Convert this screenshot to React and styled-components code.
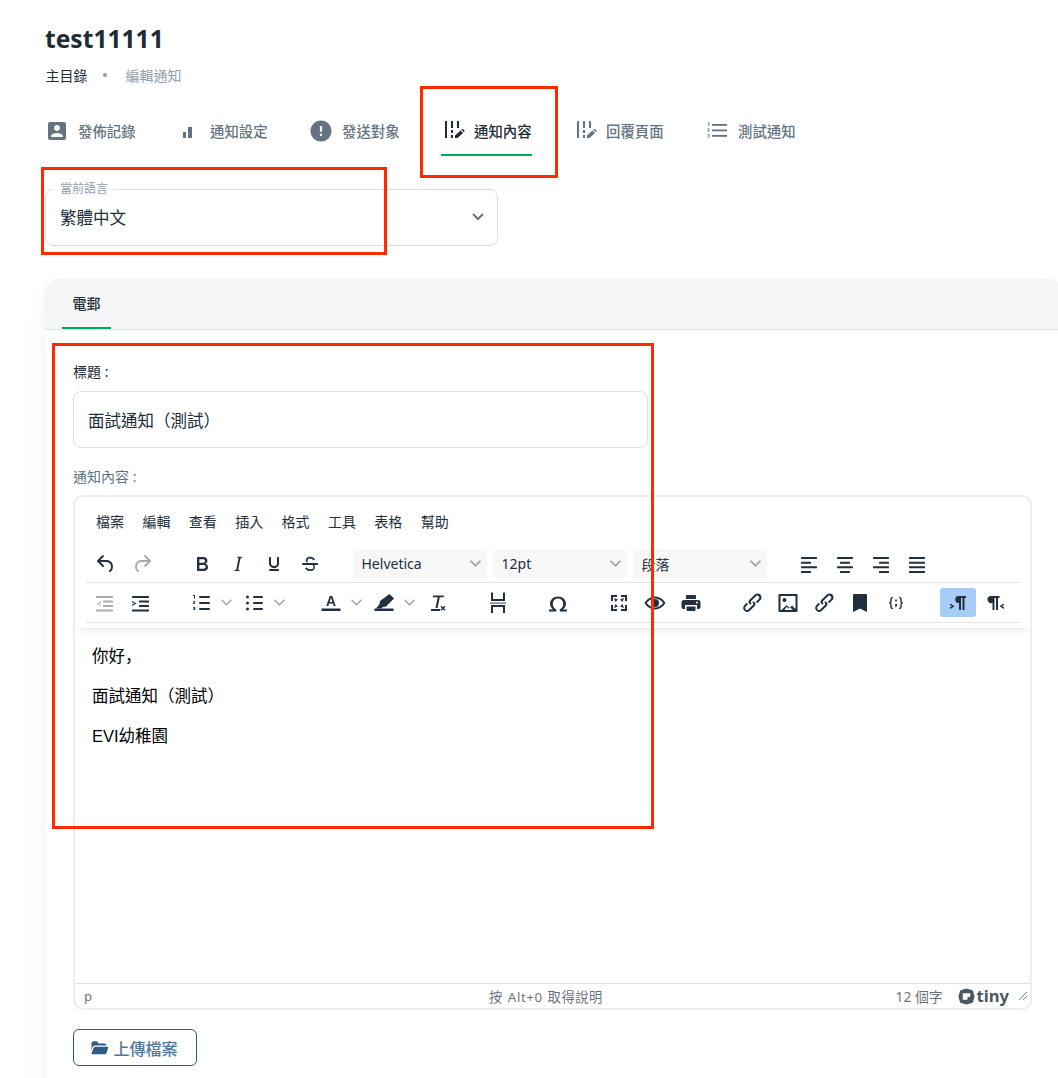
import React from 'react';
import styled, { createGlobalStyle } from 'styled-components';

const Global = createGlobalStyle`
  html, body { margin: 0; padding: 0; background: #fff; height: 1078px; overflow: hidden; }
  body { font-family: "Noto Sans", "Noto Sans CJK TC", sans-serif; color: #212B36; }
  #root { height: 1078px; overflow: hidden; position: relative; }
  * { box-sizing: border-box; }
`;

const Page = styled.div`
  width: 1078px;
  padding: 22px 0 0 45px;
`;
const Title = styled.h1`
  margin: 0;
  font: 700 24.6px/34px "Noto Sans", "Noto Sans CJK TC", sans-serif;
  color: #212B36;
`;
const Crumbs = styled.div`
  margin: 9px 0 0 .5px;
  display: flex;
  align-items: center;
  height: 20px;
  font-size: 14px;
`;
const CrumbDot = styled.span`
  width: 4px;
  height: 4px;
  margin: 0 19px 0 15px;
  border-radius: 50%;
  background: #919EAB;
`;
const CrumbMuted = styled.span`
  color: #919EAB;
`;
const Tabs = styled.div`
  margin-top: 23px;
  display: flex;
  gap: 41px;
`;
const Tab = styled.div`
  position: relative;
  width: 91px;
  height: 48px;
  padding-bottom: 1px;
  display: flex;
  align-items: center;
  gap: 9px;
  font-size: 14.4px;
  font-weight: 500;
  white-space: nowrap;
  color: ${p => (p.$active ? '#212B36' : '#637381')};
  border-bottom: 2px solid ${p => (p.$active ? '#00AB55' : 'transparent')};
  svg { flex: none; }
`;
const Field = styled.div`
  position: relative;
  width: 453px;
  height: 57px;
  margin-top: 33px;
  border: 1px solid #DCE0E4;
  border-radius: 8px;
  display: flex;
  align-items: center;
  justify-content: space-between;
  padding: 0 7px 2px 14px;
  font-size: 16.5px;
`;
const Legend = styled.span`
  position: absolute;
  top: -9px;
  left: 9px;
  padding: 0 5px;
  background: #fff;
  font-size: 12px;
  line-height: 16px;
  color: #919EAB;
`;
const Card = styled.section`
  margin-top: 33px;
  width: 1018px;
  height: 900px;
  border-radius: 16px;
  background: #fff;
  box-shadow: 0 0 2px rgba(145,158,171,.2), 0 12px 24px -4px rgba(145,158,171,.12);
  overflow: hidden;
`;
const CardHead = styled.div`
  height: 51px;
  padding-left: 17px;
  background: #F4F6F8;
  border-bottom: 1px solid #DFE3E8;
`;
const CardTab = styled.div`
  width: 49px;
  height: 50px;
  display: flex;
  align-items: center;
  justify-content: center;
  font-size: 14px;
  font-weight: 500;
  color: #212B36;
  border-bottom: 2px solid #00AB55;
`;
const CardBody = styled.div`
  padding: 32px 0 0 28px;
`;
const Label = styled.div`
  height: 20px;
  font-size: 14px;
  line-height: 20px;
  color: ${p => (p.$muted ? '#637381' : '#212B36')};
`;
const Input = styled.div`
  margin: 9px 0 19px;
  width: 575px;
  height: 57px;
  padding: 0 14px;
  display: flex;
  align-items: center;
  border: 1px solid #DCE0E4;
  border-radius: 8px;
  font-size: 16.5px;
`;
const Editor = styled.div`
  margin-top: 8px;
  position: relative;
  width: 959px;
  height: 515px;
  border: 2px solid #EEEEEE;
  border-radius: 10px;
  overflow: hidden;
  display: flex;
  flex-direction: column;
`;
const Header = styled.div`
  height: 131px;
  flex: none;
  padding: 0 11px;
  box-shadow: 0 2px 2px -2px rgba(34,47,62,.1), 0 8px 8px -4px rgba(34,47,62,.07);
  position: relative;
`;
const Menu = styled.div`
  height: 48px;
  padding-left: 10px;
  display: flex;
  align-items: center;
  gap: 18.4px;
  font-size: 14px;
  color: #222F3E;
`;
const ToolRow = styled.div`
  height: 38px;
  padding-left: 1.5px;
  display: flex;
  align-items: center;
  gap: 24.5px;
  border-bottom: 1px solid #E3E3E3;
`;
const ToolRow2 = styled(ToolRow)`
  height: 40px;
  padding-left: 0;
  gap: 24.6px;
`;
const Group = styled.div`
  display: flex;
  align-items: center;
  margin-left: ${p => p.$shift || 0}px;
  gap: ${p => p.$gap || 0}px;
`;
const Btn = styled.span`
  width: 36px;
  height: 29px;
  flex: none;
  display: flex;
  align-items: center;
  justify-content: center;
  border-radius: 3px;
  background: ${p => (p.$on ? '#A6CCF7' : 'transparent')};
  color: ${p => (p.$off ? 'rgba(34,47,62,.4)' : '#222F3E')};
  svg { display: block; fill: currentColor; }
`;
const Split = styled.span`
  width: 53px;
  display: flex;
  align-items: center;
`;
const Chevron = styled.span`
  display: flex;
  width: 17px;
  padding-left: 2px;
  color: rgba(34,47,62,.45);
  svg { display: block; flex: none; }
`;
const SelectBox = styled.div`
  width: ${p => p.$w}px;
  height: 29px;
  padding: 0 6px 0 9px;
  display: flex;
  align-items: center;
  justify-content: space-between;
  background: #F7F7F7;
  border-radius: 3px;
  font-size: 14px;
  color: #222F3E;
  svg { color: rgba(34,47,62,.5); }
`;
const Content = styled.div`
  flex: 1;
  padding: 15px 17px;
  font: 16.5px/24px "Liberation Sans", "Noto Sans CJK TC", sans-serif;
  color: #000;
  p { margin: 0 0 16px; }
`;
const Comma = styled.span`
  font-family: "Noto Sans CJK SC", sans-serif;
`;
const Status = styled.div`
  height: 25px;
  flex: none;
  position: relative;
  border-top: 1px solid #E3E3E3;
  padding: 0 2px 0 9px;
  display: flex;
  align-items: center;
  justify-content: space-between;
  font-size: 13.3px;
  color: rgba(34,47,62,.7);
`;
const Help = styled.span`
  position: absolute;
  left: 414px;
  word-spacing: 1px;
  letter-spacing: .55px;
`;
const StatusRight = styled.div`
  display: flex;
  align-items: center;
  font-size: 13.8px;
`;
const Tiny = styled.span`
  margin-left: 15px;
  display: flex;
  align-items: center;
  gap: 2px;
  font: 700 16.6px/16px "Noto Sans", sans-serif;
  color: #4B5864;
`;
const Grip = styled.svg`
  margin-left: 9px;
`;
const Upload = styled.button`
  margin-top: 19px;
  width: 124px;
  height: 37px;
  padding: 0 3px 0 0;
  display: flex;
  align-items: center;
  justify-content: center;
  gap: 4px;
  background: #fff;
  border: 1px solid #2F5C85;
  border-radius: 6px;
  font: 500 16px "Noto Sans", "Noto Sans CJK TC", sans-serif;
  color: #54789A;
  svg { color: #2F5C85; }
`;
const Mark = styled.div`
  position: absolute;
  left: ${p => p.$x}px;
  top: ${p => p.$y}px;
  width: ${p => p.$w}px;
  height: ${p => p.$h}px;
  border: 3px solid #FF2B00;
  pointer-events: none;
`;

const I = ({ d, children, size = 24, vb = 24 }) => (
  <svg width={size} height={size} viewBox={`0 0 ${vb} ${vb}`} fill="currentColor">{d ? <path d={d} /> : children}</svg>
);
const Chev = ({ w = 11, h = 7 }) => (
  <svg width={w} height={h} viewBox="0 0 10 6" fill="none" stroke="currentColor" strokeWidth="1.2"><path d="M.5.5 5 5 9.500.5" /></svg>
);

const Tune = ({ fill }) => (
  <svg width="24" height="24" viewBox="0 -1 24 24" fill={fill}>
    <rect x="4" y="1" width="2" height="17" />
    <rect x="10" y="1" width="2" height="7" /><rect x="10" y="10" width="2" height="3" /><rect x="10" y="15" width="2" height="3" />
    <rect x="16" y="1" width="2" height="7" />
    <path d="M14 15.500v2.500h2.500l5.500-5-2.500-2.500zM20.300 9.700l2.500 2.500 1-1.200-2.300-2.300z" />
  </svg>
);
const TabList = () => (
  <svg width="24" height="24" viewBox="0 0 24 24" fill="#637381">
    <rect x="7" y="5" width="15" height="1.800" /><rect x="7" y="10.500" width="15" height="1.800" /><rect x="7" y="16" width="15" height="1.800" />
    <path d="M3 3.500h1.300V7H3.400V4.500H3zM2.500 9.500h2v.8L3.500 11.700h1v.7h-2v-.7l1-1.400h-1zM2.500 15h2v3.500h-2v-.6h1.200v-.6H3v-.6h.7v-1h-1.200z" />
  </svg>
);
const NumList = () => (
  <svg width="24" height="24" viewBox="0 0 24 24" fill="currentColor">
    <rect x="10" y="17" width="11" height="2" rx="1" /><rect x="10" y="11" width="11" height="2" rx="1" /><rect x="10" y="5" width="11" height="2" rx="1" />
    <path d="M6 4v3.500H5V5H4V4zM4 10h2.200v.8L5 12.200h1.200V13H4v-.8l1.200-1.400H4zM4 16h2.200v3H4v-.7h1.300v-.4H4.500v-.7h.8v-.5H4z" />
  </svg>
);
const BulList = () => (
  <I><rect x="11" y="5" width="10" height="2" rx="1" /><rect x="11" y="11" width="10" height="2" rx="1" /><rect x="11" y="17" width="10" height="2" rx="1" /><circle cx="5.500" cy="6" r="1.500" /><circle cx="5.500" cy="12" r="1.500" /><circle cx="5.500" cy="18" r="1.500" /></I>
);
const Align = ({ rows }) => (
  <I>{rows.map(([x, w], i) => <rect key={i} x={x} y={5 + i * 4.67} width={w} height="2" rx=".5" />)}</I>
);
const LinkIco = () => (
  <I d="M6.200 12.300a1 1 0 0 1 1.400 1.400l-2.100 2.100a2 2 0 0 0 2.800 2.800l4.800-4.800a1 1 0 0 0 0-1.400 1 1 0 1 1 1.400-1.300 2.900 2.900 0 0 1 0 4.100l-4.800 4.800a4 4 0 0 1-5.600-5.600l2.100-2.100zm11.600-.6a1 1 0 0 1-1.400-1.400l2.100-2.100a2 2 0 1 0-2.800-2.800L10.900 10.200a1 1 0 0 0 0 1.400 1 1 0 1 1-1.400 1.300 2.900 2.900 0 0 1 0-4.100l4.800-4.800a4 4 0 1 1 5.600 5.600l-2.100 2.100z" />
);

const tabs = [
  ['發佈記錄', <I key="a" d="M3 5v14c0 1.100.89 2 2 2h14c1.100 0 2-.9 2-2V5c0-1.100-.9-2-2-2H5c-1.110 0-2 .9-2 2zm12 4c0 1.660-1.340 3-3 3s-3-1.340-3-3 1.340-3 3-3 3 1.340 3 3zm-9 8c0-2 4-3.100 6-3.100s6 1.100 6 3.100v1H6v-1z" />],
  ['通知設定', <I key="b"><rect x="6" y="13" width="3" height="6" /><rect x="11" y="8" width="4" height="11" /></I>],
  ['發送對象', <I key="c" d="M12 1.500C6.200 1.500 1.500 6.200 1.500 12S6.200 22.500 12 22.500 22.500 17.800 22.500 12 17.800 1.500 12 1.500zm1.100 15.500h-2.200v-2.200h2.200V17zm0-4.300h-2.200V7h2.200v5.700z" />],
  ['通知內容', <Tune key="d" fill="#212B36" />],
  ['回覆頁面', <Tune key="e" fill="#637381" />],
  ['測試通知', <TabList key="f" />],
];

export default function App() {
  return (
    <>
      <Global />
      <Page>
        <Title>test11111</Title>
        <Crumbs>主目錄<CrumbDot /><CrumbMuted>編輯通知</CrumbMuted></Crumbs>
        <Tabs>
          {tabs.map(([t, ic], i) => <Tab key={t} $active={i === 3}>{ic}{t}</Tab>)}
        </Tabs>
        <Field>
          <Legend>當前語言</Legend>
          繁體中文
          <svg width="24" height="24" viewBox="0 0 24 24" fill="#637381"><path d="M12 15.400 6.300 9.700l1.400-1.400 4.300 4.300 4.300-4.300 1.400 1.400z" /></svg>
        </Field>
        <Card>
          <CardHead><CardTab>電郵</CardTab></CardHead>
          <CardBody>
            <Label>標題 :</Label>
            <Input>面試通知（測試）</Input>
            <Label $muted>通知內容 :</Label>
            <Editor>
              <Header>
                <Menu>
                  {['檔案', '編輯', '查看', '插入', '格式', '工具', '表格', '幫助'].map(m => <span key={m}>{m}</span>)}
                </Menu>
                <ToolRow>
                  <Group>
                    <Btn><I d="M6.400 8H12c3.700 0 6.200 2 6.800 5.100.6 2.700-.4 5.600-2.300 6.800a1 1 0 0 1-1-1.800c1.100-.6 1.800-2.700 1.400-4.600-.5-2.100-2.100-3.500-4.900-3.500H6.400l3.300 3.300a1 1 0 1 1-1.400 1.400l-5-5a1 1 0 0 1 0-1.400l5-5a1 1 0 0 1 1.400 1.400L6.400 8z" /></Btn>
                    <Btn $off><I d="M17.600 10H12c-2.800 0-4.400 1.400-4.900 3.500-.4 2 .3 4 1.400 4.600a1 1 0 1 1-1 1.800c-2-1.200-2.900-4.100-2.300-6.800.6-3 3-5.100 6.800-5.100h5.600l-3.300-3.300a1 1 0 1 1 1.400-1.400l5 5a1 1 0 0 1 0 1.400l-5 5a1 1 0 0 1-1.400-1.400l3.300-3.300z" /></Btn>
                  </Group>
                  <Group>
                    <Btn><I d="M7.800 19c-.3 0-.5 0-.6-.2l-.2-.5V5.700c0-.2 0-.4.2-.5l.6-.2h5c1.500 0 2.700.3 3.500 1 .7.6 1.100 1.400 1.100 2.500a3 3 0 0 1-.6 1.900c-.4.600-1 1-1.600 1.200.4.100.9.300 1.300.6s.8.700 1 1.200c.4.400.5 1 .5 1.600 0 1.300-.4 2.300-1.300 3-.8.700-2.100 1-3.800 1H7.800zm5-8.300c.6 0 1.200-.1 1.600-.5.4-.3.6-.7.6-1.300 0-1.100-.8-1.700-2.300-1.700H9.300v3.500h3.400zm.5 6c.7 0 1.300-.1 1.700-.4.400-.4.6-.9.6-1.500s-.2-1-.7-1.400c-.4-.3-1-.4-2-.4H9.400v3.800h4z" /></Btn>
                    <Btn><I d="M16.700 4.700l-.1.900h-.3c-.6 0-1 0-1.400.3-.3.300-.4.600-.5 1.100l-2.100 9.800v.6c0 .5.4.8 1.400.8h.2l-.2.800H8l.2-.8h.2c1.100 0 1.800-.5 2-1.500l2-9.800.1-.5c0-.6-.4-.8-1.400-.8h-.3l.2-.9h5.800z" /></Btn>
                    <Btn><I d="M16 5c.6 0 1 .4 1 1v5.500a4 4 0 0 1-.4 1.800l-1 1.400a5.300 5.300 0 0 1-5.500 1 5 5 0 0 1-1.600-1c-.5-.4-.8-.9-1.100-1.400a4 4 0 0 1-.4-1.800V6c0-.6.4-1 1-1s1 .4 1 1v5.500c0 .3 0 .6.2 1l.6.7a3.300 3.300 0 0 0 2.200.8 3.400 3.400 0 0 0 2.200-.8c.3-.2.4-.5.6-.8l.2-.9V6c0-.6.4-1 1-1zM8 17h8c.6 0 1 .4 1 1s-.4 1-1 1H8a1 1 0 0 1 0-2z" /></Btn>
                    <Btn><I d="M15.600 8.500c-.5-.7-1-1.100-1.300-1.300-.6-.4-1.300-.6-2-.6-2.700 0-2.800 1.700-2.800 2.100 0 .7.300 1.200.8 1.300h-2c-.3-.4-.5-.9-.5-1.500 0-1.700 1.200-3.700 4.500-3.700 1.100 0 2.100.3 3.100 1 .6.400 1.100 1 1.600 1.700l-1.400 1zM5 11h14c.6 0 1 .4 1 1s-.4 1-1 1h-2.700c.4.600.6 1.200.6 1.900 0 1.400-.7 4.100-5 4.100A6.200 6.200 0 0 1 7 16.400l1.500-1.100c.4.600 1.600 2 3.700 2 1.600 0 2.500-.4 3-1 .5-.8.3-2-.2-2.600l-.2-.7H5a1 1 0 0 1 0-2z" /></Btn>
                  </Group>
                  <Group $gap={6}>
                    <SelectBox $w={134}>Helvetica<Chev /></SelectBox>
                    <SelectBox $w={134}>12pt<Chev /></SelectBox>
                    <SelectBox $w={134}>段落<Chev /></SelectBox>
                  </Group>
                  <Group>
                    <Btn><Align rows={[[4, 16], [4, 10], [4, 16], [4, 10]]} /></Btn>
                    <Btn><Align rows={[[4, 16], [7, 10], [4, 16], [7, 10]]} /></Btn>
                    <Btn><Align rows={[[4, 16], [10, 10], [4, 16], [10, 10]]} /></Btn>
                    <Btn><Align rows={[[4, 16], [4, 16], [4, 16], [4, 16]]} /></Btn>
                  </Group>
                </ToolRow>
                <ToolRow2>
                  <Group>
                    <Btn $off><I><rect x="4" y="5" width="17" height="2" rx=".5" /><rect x="11" y="9.500" width="10" height="2" rx=".5" /><rect x="11" y="14" width="10" height="2" rx=".5" /><rect x="4" y="18.500" width="17" height="2" rx=".5" /><path d="M9 10v1l-2.300 1.500L9 14v1l-4-2.500z" /></I></Btn>
                    <Btn><I><rect x="4" y="5" width="17" height="2" rx=".5" /><rect x="11" y="9.500" width="10" height="2" rx=".5" /><rect x="11" y="14" width="10" height="2" rx=".5" /><rect x="4" y="18.500" width="17" height="2" rx=".5" /><path d="M4 10v1.200l2.300 1.300L4 13.800V15l4.500-2.500z" /></I></Btn>
                  </Group>
                  <Group>
                    <Split><Btn><NumList /></Btn><Chevron><Chev /></Chevron></Split>
                    <Split><Btn><BulList /></Btn><Chevron><Chev /></Chevron></Split>
                  </Group>
                  <Group>
                    <Split><Btn><I><path d="M10.700 5h2.600l3.400 10h-2l-.8-2.500h-3.800L9.300 15h-2zm-.1 6h2.800L12 6.800z" /><rect x="2.500" y="17.500" width="19" height="2.500" /></I></Btn><Chevron><Chev /></Chevron></Split>
                    <Split><Btn><I><path d="M17.500 3 22 7.500l-8 8-3 .5-2 1.500H4l3.500-4.500.5-3z" /><rect x="2.500" y="17.500" width="19" height="2.500" /></I></Btn><Chevron><Chev /></Chevron></Split>
                    <Btn><I><path d="M8 4.500h11l-.3 1.800h-3.900l-2.200 10.700h-2.100L12.700 6.300H7.700z" /><rect x="6" y="18" width="9" height="2" /><path d="M16.400 14.700l1.600 1.500 1.600-1.500 1 1-1.600 1.500 1.600 1.500-1 1-1.600-1.500-1.600 1.500-1-1 1.600-1.500-1.600-1.500z" /></I></Btn>
                  </Group>
                  <Group>
                    <Btn><I><rect x="5" y="1.500" width="2" height="8" /><rect x="17" y="1.500" width="2" height="8" /><rect x="5" y="8" width="14" height="2" /><rect x="4" y="11.500" width="16" height="1.200" opacity=".75" /><rect x="5" y="14" width="14" height="2" /><rect x="5" y="14" width="2" height="8" /><rect x="17" y="14" width="2" height="8" /></I></Btn>
                  </Group>
                  <Group>
                    <Btn><I d="M21 19.500v1h-7.100l-.2-2.100c2.100-1 3.500-3.200 3.500-5.500C17.200 9.800 14.900 7.600 12 7.600S6.800 9.800 6.800 12.900c0 2.300 1.400 4.500 3.500 5.500l-.2 2.100H3v-2h4.200C5.300 17 4 15.100 4 12.900 4 8.600 7.500 5.500 12 5.500s8 3.100 8 7.400c0 2.200-1.300 4.100-3.200 5.600H21z" /></Btn>
                  </Group>
                  <Group>
                    <Btn><I d="M4 4h6v2H6v4H4zM14 4h6v6h-2V6h-4zM4 14h2v4h4v2H4zM18 14h2v6h-6v-2h4zM7 7l4 1.500-2.500 2.500zM17 7l-1.500 4L13 8.500zM7 17l1.500-4 2.500 2.500zM17 17l-4-1.500 2.500-2.500z" /></Btn>
                    <Btn><I d="M12 5.500c5.500 0 9.500 4.500 10.500 6.500-1 2-5 6.500-10.500 6.500S2.500 14 1.500 12c1-2 5-6.500 10.500-6.500zm0 2c-3.800 0-6.800 2.800-8.200 4.500 1.400 1.700 4.400 4.500 8.200 4.500s6.800-2.800 8.200-4.500C18.800 10.300 15.800 7.500 12 7.500zM12 8a4 4 0 1 1-4 4c0 .5.500 1 1.500 1A1.500 1.500 0 0 0 11 11.500c0-1-.5-1.500-1-2A4 4 0 0 1 12 8z" /></Btn>
                    <Btn><I d="M8 4h8a1 1 0 0 1 1 1v3H7V5a1 1 0 0 1 1-1zM5 9h14a2.500 2.500 0 0 1 2.500 2.500V16a2 2 0 0 1-2 2H18v-4H6v4H4.500a2 2 0 0 1-2-2v-4.500A2.500 2.500 0 0 1 5 9zm13 1.500a1 1 0 1 0 0 2 1 1 0 0 0 0-2zM7.500 15.500h9V19a1 1 0 0 1-1 1h-7a1 1 0 0 1-1-1z" /></Btn>
                  </Group>
                  <Group>
                    <Btn><LinkIco /></Btn>
                    <Btn><I d="M3.500 3h17a1 1 0 0 1 1 1v16a1 1 0 0 1-1 1h-17a1 1 0 0 1-1-1V4a1 1 0 0 1 1-1zm1 2v14h1.200l4.800-5 3 3 2.500-2.500 3.500 3.500V5zM8.500 7a2 2 0 1 1 0 4 2 2 0 0 1 0-4zM8.500 19h8.300l-3-3-1.500 1.500-1.800-1.800z" /></Btn>
                    <Btn><LinkIco /></Btn>
                    <Btn><I d="M6 3h12a1 1 0 0 1 1 1v17l-7-3.500L5 21V4a1 1 0 0 1 1-1z" /></Btn>
                    <Btn><I d="M9 6v1.200c-1 0-1.300.3-1.300 1.200v2c0 .8-.4 1.300-1.100 1.600.7.300 1.100.8 1.100 1.600v2c0 .9.300 1.200 1.300 1.200V18c-1.800 0-2.700-.7-2.700-2.300v-1.800c0-.9-.3-1.300-1.300-1.300v-1.200c1 0 1.300-.4 1.300-1.300V8.300C6.300 6.700 7.200 6 9 6zm6 0c1.800 0 2.700.7 2.700 2.300v1.800c0 .9.300 1.300 1.300 1.300v1.200c-1 0-1.300.4-1.300 1.300v1.800c0 1.600-.9 2.300-2.700 2.300v-1.200c1 0 1.300-.3 1.300-1.200v-2c0-.8.400-1.300 1.100-1.600-.7-.3-1.100-.8-1.100-1.600v-2c0-.9-.3-1.200-1.300-1.200zM12 8.500a1 1 0 1 1 0 2 1 1 0 0 1 0-2zm-1 4.500h2v1.500l-1 1.800h-1l.7-1.800H11z" /></Btn>
                  </Group>
                  <Group $shift={1.500}>
                    <Btn $on><I d="M12.500 5H20v2h-1.500v12h-2V7h-1.500v12h-2v-7a3.500 3.500 0 0 1-.5-7zM4 12.500l4.500 2.700L4 18v-1.700l2-1.100-2-1.100z" /></Btn>
                    <Btn><I d="M8 5h9.500v2H16v12h-2V7h-1.500v12h-2v-7A3.500 3.500 0 0 1 8 5zM22 12.500v1.600l-2 1.100 2 1.100V18l-4.500-2.800z" /></Btn>
                  </Group>
                </ToolRow2>
              </Header>
              <Content>
                <p>你好<Comma>，</Comma></p>
                <p>面試通知（測試）</p>
                <p>EVI幼稚園</p>
              </Content>
              <Status>
                <span>p</span>
                <Help>按 Alt+0 取得說明</Help>
                <StatusRight>
                  12 個字
                  <Tiny>
                    <svg width="17" height="17" viewBox="0 0 18 18" fill="#4B5864"><path fillRule="evenodd" d="M9 .5l5.500 1.500a2 2 0 0 1 1.500 1.500L17.500 9 16 14.500a2 2 0 0 1-1.500 1.500L9 17.500 3.500 16A2 2 0 0 1 2 14.500L.5 9 2 3.500A2 2 0 0 1 3.500 2zM5 5.500v7h5v-3h3v-4z" /></svg>
                    tiny
                  </Tiny>
                  <Grip width="10" height="10" viewBox="0 0 10 10" stroke="rgba(34,47,62,.6)" fill="none"><path d="M1 9 9 1M5 9l4-4" /></Grip>
                </StatusRight>
              </Status>
            </Editor>
            <Upload>
              <svg width="20" height="20" viewBox="0 0 24 24" fill="currentColor"><path d="M3 6.500A2.500 2.500 0 0 1 5.500 4h4l2 2.500h7A2.500 2.500 0 0 1 21 9H7a3 3 0 0 0-2.800 2L3 15zM7.500 10.500H22a1 1 0 0 1 1 1.300l-2 6.200a2 2 0 0 1-2 1.500H4a1 1 0 0 1-1-1.300l2.500-6.200a2.500 2.500 0 0 1 2-1.500z" /></svg>
              上傳檔案
            </Upload>
          </CardBody>
        </Card>
      </Page>
      <Mark $x={420} $y={86} $w={138} $h={92} />
      <Mark $x={41} $y={167} $w={346} $h={88} />
      <Mark $x={52} $y={343} $w={602} $h={486} />
    </>
  );
}
